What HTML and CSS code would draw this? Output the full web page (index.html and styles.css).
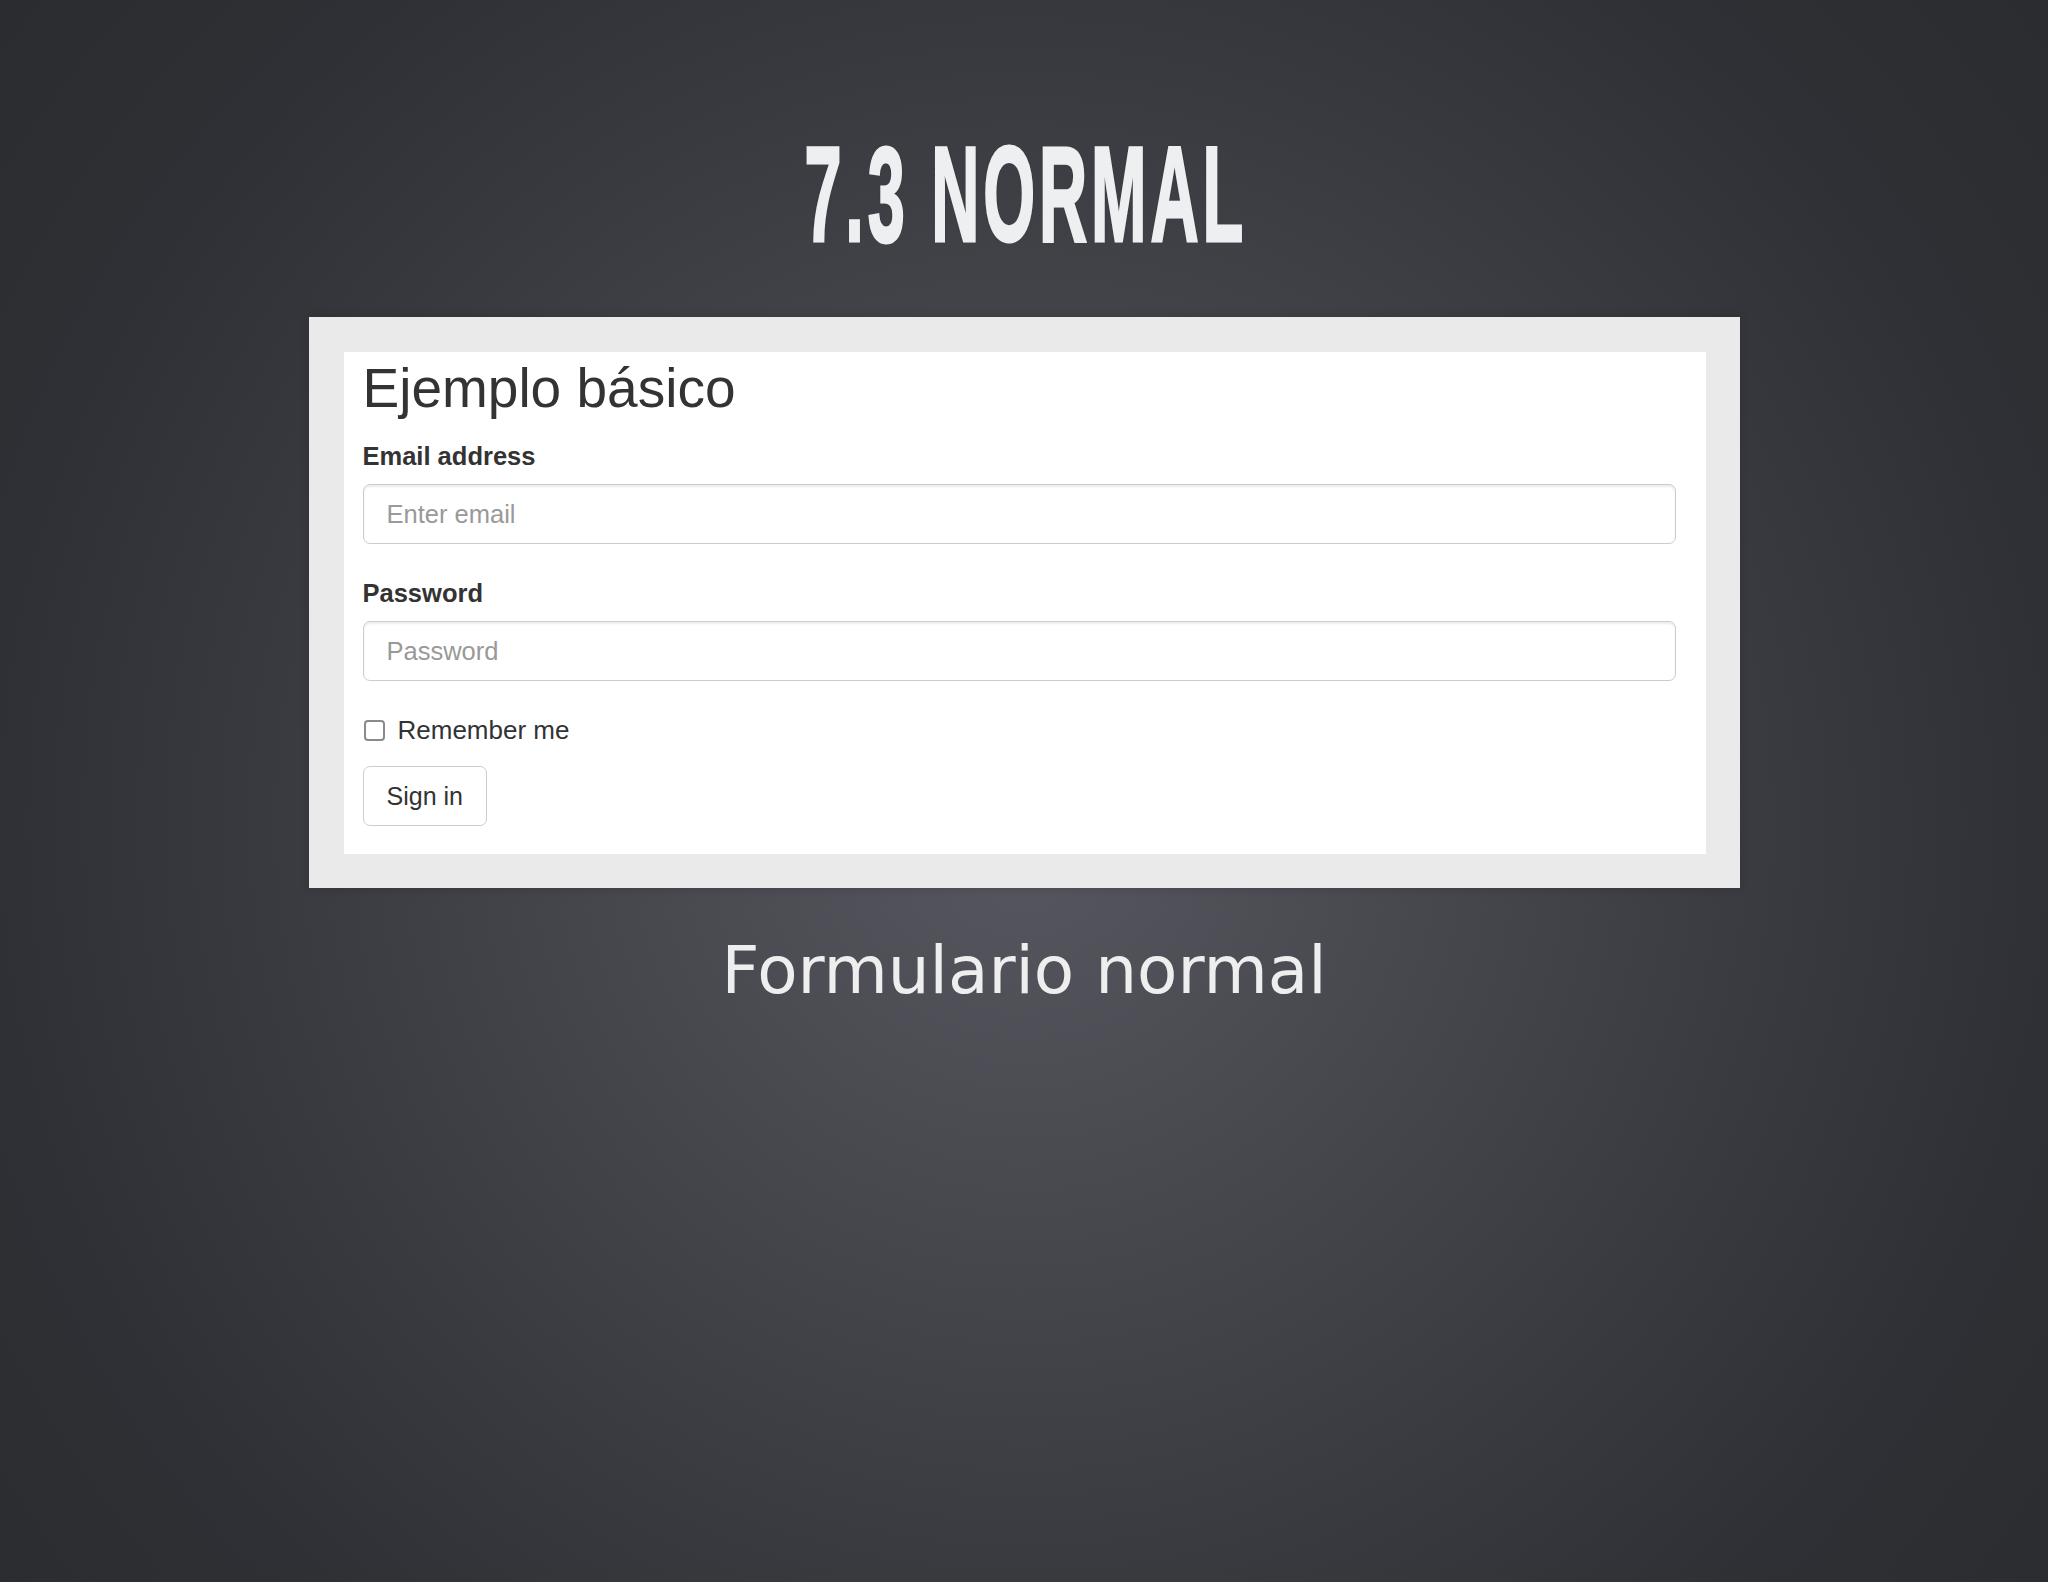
FILE: index.html
```html
<!DOCTYPE html>
<html lang="es">
<head>
    <meta charset="UTF-8">
    <meta name="viewport" content="width=device-width, initial-scale=1.0">
    <title>7.3 Normal</title>
    <link rel="stylesheet" href="styles.css">
</head>
<body>
    <div class="slide">
        <h1 class="titulo">7.3 NORMAL</h1>

        <div class="marco">
            <form class="hoja">
                <h2>Ejemplo básico</h2>
                <div class="grupo">
                    <label for="email">Email address</label>
                    <input type="email" id="email" placeholder="Enter email">
                </div>
                <div class="grupo">
                    <label for="password">Password</label>
                    <input type="password" id="password" placeholder="Password">
                </div>
                <div class="recordar">
                    <input type="checkbox" id="recordar">
                    <span>Remember me</span>
                </div>
                <button type="button">Sign in</button>
            </form>
        </div>

        <p class="pie">Formulario normal</p>
    </div>
</body>
</html>
```

FILE: styles.css
```css
    html, body {
        margin: 0;
        height: 100%;
    }
    body {
        min-height: 1582px;
        background: radial-gradient(circle farthest-corner at 50% 52%, #57585f 0%, #393a40 58%, #2f3035 79%, #2b2c2f 100%);
        font-family: "Liberation Sans", Arial, sans-serif;
    }
    .slide {
        display: flex;
        flex-direction: column;
        align-items: center;
    }
    .titulo {
        margin: 126px 0 0;
        padding-left: 8px;
        font-family: "Liberation Sans", Arial, sans-serif;
        font-weight: bold;
        font-size: 136px;
        line-height: 136px;
        letter-spacing: 8px;
        color: #eeeff1;
        -webkit-text-stroke: 3px #eeeff1;
        transform: scaleX(0.49);
        text-shadow: 0 0 4px rgba(0, 0, 0, 0.2);
    }
    .marco {
        margin-top: 55px;
        width: 1431px;
        box-sizing: border-box;
        padding: 35px 34px 34px 35px;
        background-color: #eaeaeb;
        box-shadow: 0 0 10px rgba(0, 0, 0, 0.15);
    }
    .hoja {
        background-color: #fff;
        padding: 6px 30px 28px 19px;
        color: #333;
        margin: 0;
    }
    .hoja h2 {
        margin: 0 0 20px;
        font-weight: normal;
        font-size: 55px;
        line-height: 60px;
    }
    .grupo {
        margin-bottom: 31px;
    }
    .grupo label {
        display: block;
        font-weight: bold;
        font-size: 25.5px;
        line-height: 36px;
        margin-bottom: 10px;
    }
    .grupo input {
        display: block;
        width: 100%;
        height: 60px;
        box-sizing: border-box;
        padding: 0 23px;
        border: 1px solid #ccc;
        border-radius: 7px;
        box-shadow: inset 0 2px 2px rgba(0, 0, 0, 0.075);
        font-family: "Liberation Sans", Arial, sans-serif;
        font-size: 25.5px;
        color: #555;
    }
    .grupo input::placeholder {
        color: #999;
    }
    .recordar {
        display: flex;
        align-items: center;
        gap: 13px;
        font-size: 26px;
        line-height: 36px;
        margin-bottom: 18px;
    }
    .recordar input {
        appearance: none;
        margin: 0 0 0 1px;
        width: 21px;
        height: 21px;
        box-sizing: border-box;
        border: 2px solid #8a8a8a;
        border-radius: 4px;
        background: #fff;
    }
    .hoja button {
        height: 60px;
        padding: 0 23px;
        background-color: #fff;
        border: 1px solid #ccc;
        border-radius: 7px;
        font-family: "Liberation Sans", Arial, sans-serif;
        font-size: 25px;
        color: #333;
    }
    .pie {
        margin: 43px 0 0;
        font-family: "DejaVu Sans", sans-serif;
        font-size: 66px;
        line-height: 80px;
        color: #eeeeef;
    }
```
